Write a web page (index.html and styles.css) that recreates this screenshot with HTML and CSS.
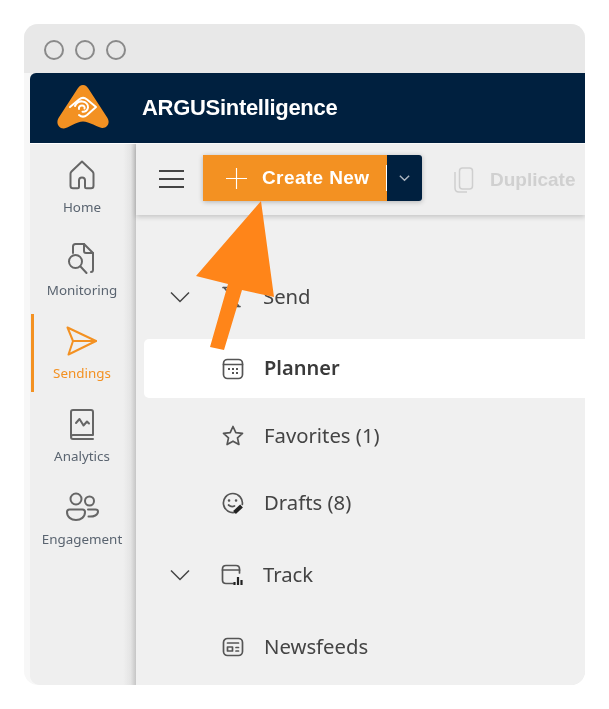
FILE: index.html
```html
<!DOCTYPE html>
<html lang="en">
<head>
  <meta charset="UTF-8" />
  <title>ARGUSintelligence</title>
  <link rel="stylesheet" href="styles.css">
</head>
<body>
  <div class="window">
    <div class="titlebar">
      <span class="dot"></span>
      <span class="dot"></span>
      <span class="dot"></span>
    </div>
    <div class="app">
      <header class="topbar">
        <svg class="logo" viewBox="0 0 54 46">
          <path d="M27 1c2.500 0 4 1.500 5.500 3.800L51.500 34c3 5-.5 10.500-5.500 10-4-.4-13-6.500-19-6.500S12 44.100 8 44.500C3 45 -.5 39.500 2.500 34L21.500 4.800C23 2.500 24.500 1 27 1Z" fill="#f39122"/>
          <g fill="none" stroke="#fff" stroke-width="2" stroke-linecap="round" stroke-linejoin="round">
            <path d="M14 23l9-7.500c2.500-2 5.500-2 8 0l9 7.500-9 8c-2.500 2-5.500 2-8 0"/>
            <path d="M19 22c1.500-3.500 4.500-5 7.500-4.500 3.500.5 6 3 5.500 6s-3 4.500-5.500 4.200"/>
            <path d="M23 25c-.5-2 1-3.500 3-3.500s3 1.500 2.500 3"/>
          </g>
        </svg>
        <span class="brand">ARGUSintelligence</span>
      </header>
      <div class="main">
        <nav class="sidebar">
          <a class="nav-item">
            <svg class="nav-icon" viewBox="0 0 32 32"><path d="M16 2.500 5.500 12.500c-.6.600-1 1.400-1 2.300v12c0 1.500 1 2.500 2.500 2.500h4.500c.8 0 1.500-.7 1.500-1.500v-6.500c0-1.500 1.300-2.800 3-2.800s3 1.300 3 2.800v6.500c0 .8.700 1.500 1.500 1.500H25c1.500 0 2.500-1 2.500-2.500v-12c0-.9-.4-1.700-1-2.300Z"/></svg>
            <span>Home</span>
          </a>
          <a class="nav-item">
            <svg class="nav-icon" viewBox="0 0 32 32"><path d="M7 11V4.500C7 3 8 2 9.500 2H18l9 9v16.500c0 1.500-.8 2.500-2 2.500"/><path d="M18 2v7c0 1.200.8 2 2 2h7"/><circle cx="9.500" cy="19.500" r="6.500"/><path d="m14.500 24.500 6 6.500"/></svg>
            <span>Monitoring</span>
          </a>
          <a class="nav-item active">
            <svg class="nav-icon" viewBox="0 0 32 32"><path d="M1.500 2.500 30 16 2.500 29.500 7 16Z"/><path d="M7 16h23"/></svg>
            <span>Sendings</span>
          </a>
          <a class="nav-item">
            <svg class="nav-icon" viewBox="0 0 32 32"><path d="M5 28V4c0-1.200.8-2 2-2h18c1.200 0 2 .8 2 2v23H7c-1.200 0-2 .8-2 2s.8 2 2 2h20"/><path d="m10 15 3.500-4 4 6.500 3.500-4 2 2"/></svg>
            <span>Analytics</span>
          </a>
          <a class="nav-item">
            <svg class="nav-icon wide" viewBox="0 0 34 32"><circle cx="11" cy="8" r="5.500"/><circle cx="24.500" cy="10" r="4.500"/><path d="M2 21c0-1.500 1-2.500 2.500-2.500h13c1.500 0 2.500 1 2.500 2.500 0 5-4 8-9 8s-9-3-9-8Z"/><path d="M23 18.500h7.500c1.500 0 2.500 1 2.500 2 0 3.500-4 5.500-9.500 5"/></svg>
            <span>Engagement</span>
          </a>
        </nav>
        <div class="content">
          <div class="toolbar">
            <div class="menu-btn"><i></i><i></i><i></i></div>
            <div class="split-btn">
              <div class="create">
                <svg class="plus" viewBox="0 0 22 22"><path d="M11 0v22M0 11h22"/></svg>
                <span>Create New</span>
                <i class="sep"></i>
              </div>
              <div class="caret">
                <svg viewBox="0 0 14 8"><path d="m2 1.500 5 5 5-5"/></svg>
              </div>
            </div>
            <div class="duplicate">
              <svg viewBox="0 0 20 26"><rect x="5.500" y="1" width="13" height="21" rx="3"/><path d="M1 5v16c0 2.500 1.500 4 4 4h8"/></svg>
              <span>Duplicate</span>
            </div>
          </div>
          <ul class="tree">
            <li class="tree-row group send">
              <svg class="chev" viewBox="0 0 20 12"><path d="m1 1.500 9 9 9-9"/></svg>
              <svg class="row-icon" viewBox="0 0 22 22"><path d="M2 1.500h18M3 1.500l8 9.500 8-9.500M3 20.500h16M4 20.500l7-9.500 7 9.500"/></svg>
              <span>Send</span>
            </li>
            <li class="tree-row current">
              <svg class="row-icon" viewBox="0 0 22 22"><rect x="1.500" y="1.500" width="19" height="19" rx="4"/><path d="M1.500 6.500h19"/><path class="dots" d="M6 11h2M10 11h2M14 11h2M10 15h2M14 15h2"/></svg>
              <span>Planner</span>
            </li>
            <li class="tree-row">
              <svg class="row-icon" viewBox="0 0 22 22"><path d="m11 1.500 2.800 6.200 6.700.7-5 4.500 1.400 6.600L11 16.200l-5.900 3.300 1.400-6.600-5-4.500 6.700-.7Z"/></svg>
              <span>Favorites (1)</span>
            </li>
            <li class="tree-row">
              <svg class="row-icon" viewBox="0 0 22 22"><path d="M14 20a9.500 9.500 0 1 1 6.300-7.500"/><path d="M7 8.500h.1M14 8.500h.1" stroke-width="2.500"/><path d="M6.500 13c2 1.800 4 2 6 1"/><path class="pen" d="m12.500 20.500 7-6.500" stroke-width="4"/></svg>
              <span>Drafts (8)</span>
            </li>
            <li class="tree-row group track">
              <svg class="chev" viewBox="0 0 20 12"><path d="m1 1.500 9 9 9-9"/></svg>
              <svg class="row-icon" viewBox="0 0 22 22"><path d="M12 19.500H5c-2.200 0-3.500-1.300-3.500-3.500V5c0-2.200 1.300-3.500 3.500-3.500h10c2.200 0 3.500 1.300 3.500 3.500v4"/><path d="M1.500 6h17"/><path class="pen" d="M13.500 21v-3M17 21v-8M20.500 21v-5" stroke-width="2.200"/></svg>
              <span>Track</span>
            </li>
            <li class="tree-row track">
              <svg class="row-icon" viewBox="0 0 22 22"><rect x="1.500" y="2.500" width="19" height="17" rx="4"/><path d="M5.500 7h11"/><rect x="5.500" y="11" width="5" height="4"/><path d="M14 11.500h2.500M14 15h2.500"/></svg>
              <span>Newsfeeds</span>
            </li>
          </ul>
        </div>
      </div>
    </div>
    <svg class="callout" viewBox="24 24 561 661">
      <path d="M261 201 196 276 228 284 210 347 224 350 242 290 274 297Z" fill="#ff8519"/>
    </svg>
  </div>
</body>
</html>
```

FILE: styles.css
```css
* {
  box-sizing: border-box;
  margin: 0;
  padding: 0;
}

body {
  width: 609px;
  height: 709px;
  padding: 24px;
  background: #fff;
  font-family: "Noto Sans", sans-serif;
  color: #444;
  overflow: hidden;
}

.window {
  width: 561px;
  height: 661px;
  border-radius: 14px;
  background: #f7f7f7;
  display: flex;
  flex-direction: column;
  overflow: hidden;
  filter: blur(0.5px);
}

.titlebar {
  height: 49px;
  flex: none;
  background: #e8e8e8;
  display: flex;
  align-items: center;
  gap: 11px;
  padding: 3px 0 0 20px;
}

.dot {
  width: 20px;
  height: 20px;
  border: 2px solid #8a8a8a;
  border-radius: 50%;
}

.app {
  flex: 1;
  margin-left: 6px;
  display: flex;
  flex-direction: column;
  min-height: 0;
  background: #efefef;
  border-bottom-left-radius: 10px;
  overflow: hidden;
}

.topbar {
  height: 71px;
  flex: none;
  background: #00203f;
  border-bottom: 1px solid #fff;
  border-top-left-radius: 6px;
  display: flex;
  align-items: center;
  padding: 0 0 3px 26px;
}

.logo {
  width: 54px;
  height: 46px;
}

.brand {
  margin: 3px 0 0 32px;
  font-family: "Liberation Sans", sans-serif;
  font-weight: 700;
  font-size: 22px;
  letter-spacing: -0.3px;
  color: #fff;
}

.main {
  flex: 1;
  display: flex;
  min-height: 0;
}

.sidebar {
  width: 106px;
  flex: none;
  background: linear-gradient(to right, #efefef 88%, #e4e4e4 95%, #c6c6c6 100%);
  display: flex;
  flex-direction: column;
  padding-top: 2px;
}

.nav-item {
  height: 83px;
  flex: none;
  display: flex;
  flex-direction: column;
  align-items: center;
  justify-content: flex-end;
  padding: 0 2px 13px 0;
  font-size: 13.4px;
  line-height: 18px;
  color: #5a6470;
  position: relative;
}

.nav-icon {
  width: 32px;
  height: 32px;
  margin-bottom: 7px;
  fill: none;
  stroke: #666;
  stroke-width: 2;
  stroke-linecap: round;
  stroke-linejoin: round;
}

.nav-icon.wide {
  width: 34px;
}

.nav-item.active {
  color: #f39122;
}

.nav-item.active::before {
  content: "";
  position: absolute;
  left: 1px;
  top: 2px;
  width: 3px;
  height: 78px;
  background: #f39122;
}

.nav-item.active .nav-icon {
  stroke: #f39122;
}

.content {
  flex: 1;
  min-width: 0;
  background: #f0f0f0;
}

.toolbar {
  height: 71px;
  background: #efefef;
  box-shadow: 0 2px 5px rgba(0, 0, 0, 0.18);
  display: flex;
  align-items: center;
  padding: 0 0 1px 23px;
}

.menu-btn {
  width: 25px;
  height: 18px;
  display: flex;
  flex-direction: column;
  justify-content: space-between;
}

.menu-btn i {
  height: 2px;
  background: #444;
}

.split-btn {
  margin: 0 0 2px 19px;
  height: 46px;
  display: flex;
  border-radius: 2px;
  box-shadow: 0 1px 5px rgba(0, 0, 0, 0.25);
}

.create {
  width: 184px;
  background: #f39122;
  display: flex;
  align-items: center;
  padding-left: 23px;
  gap: 15px;
  font-family: "Liberation Sans", sans-serif;
  font-weight: 700;
  font-size: 19px;
  letter-spacing: 0.4px;
  color: #fff;
}

.sep {
  width: 1px;
  height: 26px;
  margin-left: auto;
  background: #fff;
}

.plus {
  width: 21px;
  height: 21px;
  fill: none;
  stroke: #fff;
  stroke-width: 1.200;
}

.caret {
  width: 35px;
  background: #00203f;
  border-radius: 0 3px 3px 0;
  display: flex;
  align-items: center;
  justify-content: center;
}

.caret svg {
  width: 13px;
  height: 8px;
  fill: none;
  stroke: #aab4bf;
  stroke-width: 1.500;
}

.duplicate {
  margin: 2px 0 0 32px;
  display: flex;
  align-items: center;
  gap: 16px;
  font-family: "Liberation Sans", sans-serif;
  font-weight: 700;
  font-size: 19px;
  color: #d0d0d0;
}

.duplicate svg {
  width: 20px;
  height: 26px;
  fill: none;
  stroke: #cfcfcf;
  stroke-width: 1.500;
}

.tree {
  list-style: none;
  margin-top: 53px;
  display: flex;
  flex-direction: column;
  gap: 9px;
}

.tree-row {
  height: 58px;
  flex: none;
  display: flex;
  align-items: center;
  padding-left: 86px;
  font-size: 20.300px;
  color: #444;
}

.tree-row span {
  margin-bottom: 2px;
}

.tree-row.group {
  padding-left: 34px;
}

.tree-row.send {
  margin-bottom: 4px;
}

.tree-row.track {
  margin-top: 5px;
}

.chev {
  width: 20px;
  height: 12px;
  margin-right: 31px;
  fill: none;
  stroke: #444;
  stroke-width: 1.500;
}

.row-icon {
  width: 22px;
  height: 22px;
  margin-right: 20px;
  flex: none;
  fill: none;
  stroke: #555;
  stroke-width: 1.700;
  stroke-linecap: round;
  stroke-linejoin: round;
}

.row-icon .pen {
  stroke: #222;
  stroke-linecap: butt;
}

.row-icon .dots {
  stroke-width: 2;
  stroke-linecap: butt;
}

.tree-row.current {
  height: 59px;
  margin-left: 8px;
  padding-left: 78px;
  background: #fff;
  border-radius: 5px 0 0 5px;
  font-weight: 600;
  font-size: 20px;
  color: #3a3a3a;
}

.callout {
  position: absolute;
  left: 0;
  top: 0;
  width: 561px;
  height: 661px;
}
```
